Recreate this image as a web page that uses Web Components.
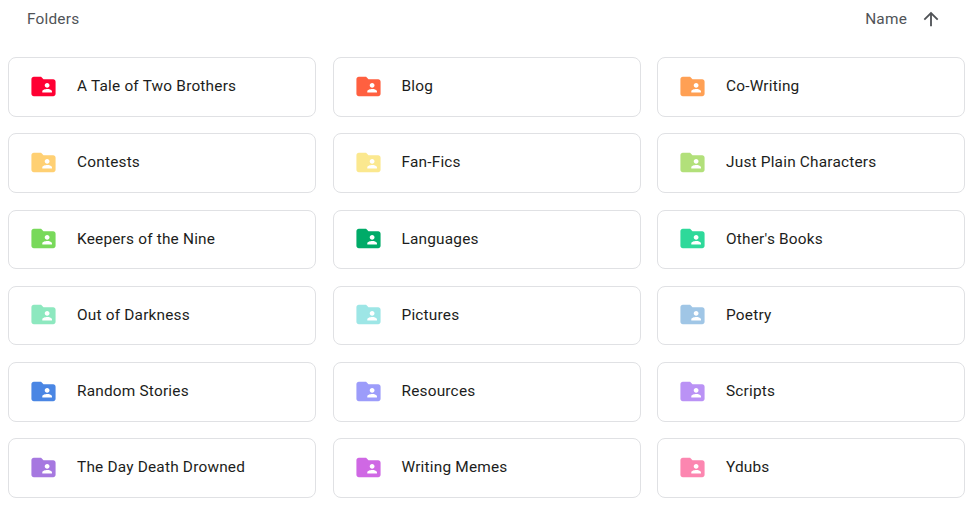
<!DOCTYPE html>
<html>
<head>
<meta charset="utf-8">
<style>
	html, body { margin: 0; padding: 0; background: #fff; }
	body { font-family: Roboto, sans-serif; overflow: hidden; }
</style>
</head>
<body>
<folder-list>
	<folder-card color="#ff0033">A Tale of Two Brothers</folder-card>
	<folder-card color="#ff6040">Blog</folder-card>
	<folder-card color="#ffa054">Co-Writing</folder-card>
	<folder-card color="#ffd073">Contests</folder-card>
	<folder-card color="#fbe88f">Fan-Fics</folder-card>
	<folder-card color="#b2e07a">Just Plain Characters</folder-card>
	<folder-card color="#78d95a">Keepers of the Nine</folder-card>
	<folder-card color="#00ab68">Languages</folder-card>
	<folder-card color="#2ed99a">Other's Books</folder-card>
	<folder-card color="#8de8bf">Out of Darkness</folder-card>
	<folder-card color="#9de6e6">Pictures</folder-card>
	<folder-card color="#a0c6e6">Poetry</folder-card>
	<folder-card color="#4a86e4">Random Stories</folder-card>
	<folder-card color="#9c9cfa">Resources</folder-card>
	<folder-card color="#ba92f5">Scripts</folder-card>
	<folder-card color="#a678e0">The Day Death Drowned</folder-card>
	<folder-card color="#cf68e4">Writing Memes</folder-card>
	<folder-card color="#fc86b0">Ydubs</folder-card>
</folder-list>
<script>
const tplList = document.createElement('template');
tplList.innerHTML = `
	<style>
	:host {
		display: block;
		width: 980px;
		height: 505px;
		box-sizing: border-box;
		padding: 0 14px 0 8px;
	}
	#elHeader {
		display: flex;
		align-items: center;
		justify-content: space-between;
		height: 38px;
		margin-bottom: 19px;
		padding: 0 24px 0 19px;
		font-size: 15.4px;
		letter-spacing: 0.2px;
		color: #505357;
	}
	#elSort {
		display: flex;
		align-items: center;
		gap: 13px;
	}
	#elSort svg {
		display: block;
		width: 22px;
		height: 22px;
	}
	#elGrid {
		display: grid;
		grid-template-columns: repeat(3, 308px);
		grid-auto-rows: 59.6px;
		column-gap: 16.5px;
		row-gap: 16.7px;
	}
	</style>
	<div id="elHeader">
		<span>Folders</span>
		<div id="elSort">
			<span>Name</span>
			<svg viewBox="0 0 24 24"><path fill="#505357" d="M4 12l1.41 1.41L11 7.83V20h2V7.83l5.58 5.59L20 12l-8-8-8 8z"/></svg>
		</div>
	</div>
	<div id="elGrid"><slot></slot></div>
`;

const tplCard = document.createElement('template');
tplCard.innerHTML = `
	<style>
	:host {
		display: flex;
		align-items: center;
		box-sizing: border-box;
		border: 1px solid #e0e1e4;
		border-radius: 8px;
		padding: 0 0 1.5px 20px;
		background: #fff;
		font-size: 15.4px;
		letter-spacing: 0.2px;
		color: #1c1d20;
	}
	svg {
		display: block;
		flex: none;
		width: 29px;
		height: 29px;
		margin-right: 19px;
	}
	</style>
	<svg viewBox="0 0 24 24"><path id="elIcon" d="M20 6h-8l-2-2H4c-1.1 0-2 .9-2 2v12c0 1.1.9 2 2 2h16c1.1 0 2-.9 2-2V8c0-1.1-.9-2-2-2zm-5 3c1.1 0 2 .9 2 2s-.9 2-2 2-2-.9-2-2 .9-2 2-2zm4 8h-8v-1c0-1.33 2.67-2 4-2s4 .67 4 2v1z"/></svg>
	<span><slot></slot></span>
`;

class FolderList extends HTMLElement {
	constructor() {
		super();
		this.attachShadow({ mode: 'open' });
		this.shadowRoot.appendChild(tplList.content.cloneNode(true));
	}
}

class FolderCard extends HTMLElement {
	constructor() {
		super();
		this.attachShadow({ mode: 'open' });
		this.shadowRoot.appendChild(tplCard.content.cloneNode(true));
	}
	connectedCallback() {
		this.shadowRoot.getElementById('elIcon').setAttribute('fill', this.getAttribute('color'));
	}
}

window.customElements.define('folder-list', FolderList);
window.customElements.define('folder-card', FolderCard);
</script>
</body>
</html>
